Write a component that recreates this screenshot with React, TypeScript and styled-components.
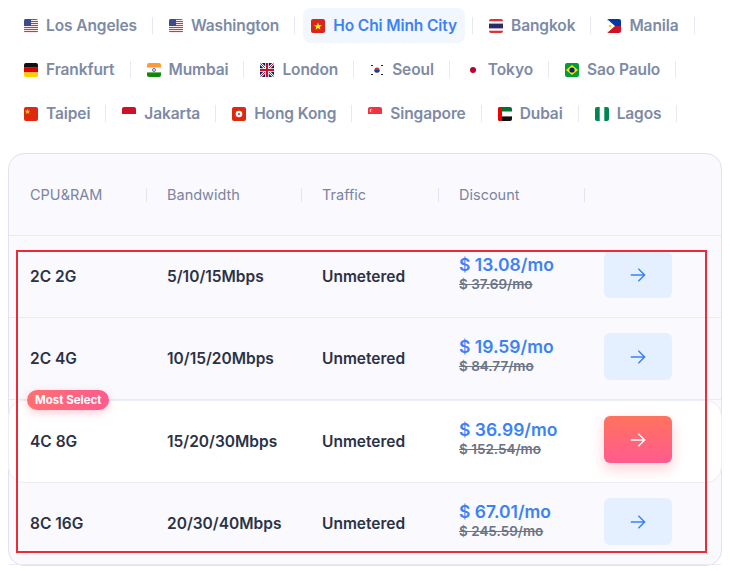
import React from "react";
import styled, { createGlobalStyle, css } from "styled-components";

const Global = createGlobalStyle`
  body { margin: 0; background: #fff; font-family: Inter, "Open Sans", sans-serif; }
`;

const Page = styled.div`
  position: relative;
  padding: 8px 8px 0 8px;
  width: 730px;
  box-sizing: border-box;
`;

const Tabs = styled.div`
  display: flex;
  flex-direction: column;
  gap: 9px;
  margin-bottom: 22px;
`;

const TabRow = styled.div`
  display: flex;
`;

const Tab = styled.div<{ $active?: boolean }>`
  position: relative;
  display: flex;
  align-items: center;
  gap: 8px;
  height: 35px;
  padding: 0 8px;
  margin: 0 8px;
  border-radius: 8px;
  font-size: 15.5px;
  font-weight: 600;
  color: #7d8aa6;
  letter-spacing: -0.1px;
  ${(p) => p.$active && css`background: #f1f6ff; color: #3b82f6;`}
  &::after {
    content: "";
    position: absolute;
    right: -8px;
    top: 9px;
    height: 17px;
    width: 1px;
    background: #e6e9f2;
  }
`;

const Flag = styled.svg`
  width: 14px;
  height: 14px;
  border-radius: 2px;
  flex: none;
`;

const Card = styled.div`
  border: 1px solid #dfe3ef;
  border-radius: 16px;
  background: #f9f9fe;
`;

const Grid = css`
  display: grid;
  grid-template-columns: 137px 155px 137px 146px 1fr;
  align-items: center;
  padding-left: 21px;
`;

const Head = styled.div`
  ${Grid};
  height: 81px;
  border-bottom: 1px solid #e8ebf5;
  font-size: 14.5px;
  color: #7b84a0;
`;

const HeadCell = styled.div`
  position: relative;
  &::after {
    content: "";
    position: absolute;
    right: 20px;
    top: 2px;
    height: 14px;
    width: 1px;
    background: #e3e6ef;
  }
`;

const Row = styled.div<{ $hot?: boolean }>`
  ${Grid};
  position: relative;
  height: 81px;
  border-bottom: 1px solid #e8ebf5;
  font-size: 15.5px;
  font-weight: 600;
  color: #2b3246;
  ${(p) => p.$hot && css`background: #fff; border: 1px solid #eceef6; border-radius: 16px; margin: 0 -1px;`}
`;

const Price = styled.div`
  display: flex;
  flex-direction: column;
  gap: 1px;
  margin-top: -8px;
`;
const Now = styled.span`
  color: #3b82f6;
  font-size: 17.5px;
  font-weight: 600;
`;
const Old = styled.span`
  color: #6b7385;
  font-size: 13.5px;
  font-weight: 600;
  text-decoration: line-through;
`;

const Btn = styled.div<{ $hot?: boolean }>`
  width: 68px;
  height: 47px;
  border-radius: 6px;
  display: flex;
  align-items: center;
  justify-content: center;
  margin-left: -1px;
  margin-top: -4px;
  background: #e4f0ff;
  color: #3b82f6;
  ${(p) => p.$hot && css`background: linear-gradient(180deg, #ff735d, #ff5b8e); color: #fff; box-shadow: 0 6px 14px rgba(255,100,120,.3);`}
`;

const Badge = styled.div`
  position: absolute;
  left: 18px;
  top: -11px;
  padding: 3px 8px;
  border-radius: 10px;
  background: linear-gradient(90deg, #ff7070, #ff5b8e);
  color: #fff;
  font-size: 11.5px;
  font-weight: 700;
  box-shadow: 0 3px 8px rgba(255,90,120,.3);
`;

const Outline = styled.div`
  position: absolute;
  left: 16px;
  top: 250px;
  width: 687px;
  height: 299px;
  border: 2px solid #ee2a3a;
  pointer-events: none;
`;

const Arrow = () => (
  <svg width="20" height="20" viewBox="0 0 24 24" fill="none" stroke="currentColor" strokeWidth="1.8" strokeLinecap="round" strokeLinejoin="round">
    <path d="M4 12h16M13 5l7 7-7 7" />
  </svg>
);

const flags: Record<string, React.ReactNode> = {
  us: (<><rect width="14" height="14" fill="#fff" />{[0,2,4,6,8,10,12].map(y=> <rect key={y} y={y} width="14" height="1.1" fill="#d33" />)}<rect width="7" height="7" fill="#3c4b8c" /></>),
  vn: (<><rect width="14" height="14" fill="#da251d" /><polygon points="7,3.5 8,6.3 11,6.3 8.6,8 9.5,10.8 7,9.1 4.5,10.8 5.4,8 3,6.3 6,6.3" fill="#ff0" /></>),
  th: (<><rect width="14" height="14" fill="#fff" /><rect width="14" height="2.3" fill="#d33" /><rect y="11.7" width="14" height="2.3" fill="#d33" /><rect y="4.6" width="14" height="4.8" fill="#2d2a6b" /></>),
  ph: (<><rect width="14" height="7" fill="#0038a8" /><rect y="7" width="14" height="7" fill="#ce1126" /><polygon points="0,0 8,7 0,14" fill="#fff" /><circle cx="3" cy="7" r="1.3" fill="#fcd116" /></>),
  de: (<><rect width="14" height="4.7" fill="#111" /><rect y="4.7" width="14" height="4.7" fill="#d00" /><rect y="9.4" width="14" height="4.6" fill="#fc0" /></>),
  in: (<><rect width="14" height="4.7" fill="#f93" /><rect y="4.7" width="14" height="4.7" fill="#fff" /><rect y="9.4" width="14" height="4.6" fill="#128807" /><circle cx="7" cy="7" r="1.5" fill="none" stroke="#008" strokeWidth=".6" /></>),
  gb: (<><rect width="14" height="14" fill="#012169" /><path d="M0 0L14 14M14 0L0 14" stroke="#fff" strokeWidth="2.5" /><path d="M0 0L14 14M14 0L0 14" stroke="#c8102e" strokeWidth="1" /><path d="M7 0v14M0 7h14" stroke="#fff" strokeWidth="3.5" /><path d="M7 0v14M0 7h14" stroke="#c8102e" strokeWidth="2" /></>),
  kr: (<><rect width="14" height="14" fill="#fff" /><circle cx="7" cy="7" r="2.6" fill="#cd2e3a" /><path d="M4.4 7a2.6 2.6 0 0 0 5.2 0" fill="#0047a0" /><g fill="#222"><rect x="1" y="2" width="2" height="1" /><rect x="11" y="2" width="2" height="1" /><rect x="1" y="11" width="2" height="1" /><rect x="11" y="11" width="2" height="1" /></g></>),
  jp: (<><rect width="14" height="14" fill="#fff" /><circle cx="7" cy="7" r="3" fill="#bc002d" /></>),
  br: (<><rect width="14" height="14" fill="#009c3b" /><polygon points="7,2 13,7 7,12 1,7" fill="#ffdf00" /><circle cx="7" cy="7" r="2.6" fill="#002776" /></>),
  cn: (<><rect width="14" height="14" fill="#de2910" /><polygon points="3.5,1.8 4.2,3.8 6.2,3.8 4.6,5 5.2,7 3.5,5.8 1.8,7 2.4,5 0.8,3.8 2.8,3.8" fill="#ffde00" /></>),
  id: (<><rect width="14" height="7" fill="#ce1126" /><rect y="7" width="14" height="7" fill="#fff" /></>),
  hk: (<><rect width="14" height="14" fill="#de2910" /><circle cx="7" cy="7" r="3.3" fill="#fff" /><circle cx="7" cy="7" r="1" fill="#de2910" /></>),
  sg: (<><rect width="14" height="7" fill="#ef3340" /><rect y="7" width="14" height="7" fill="#fff" /><circle cx="3.5" cy="3.5" r="1.8" fill="#fff" /><circle cx="4.2" cy="3.5" r="1.6" fill="#ef3340" /></>),
  ae: (<><rect width="14" height="4.7" fill="#00732f" /><rect y="4.7" width="14" height="4.7" fill="#fff" /><rect y="9.4" width="14" height="4.6" fill="#111" /><rect width="4" height="14" fill="#e00" /></>),
  ng: (<><rect width="14" height="14" fill="#fff" /><rect width="4.7" height="14" fill="#008751" /><rect x="9.3" width="4.7" height="14" fill="#008751" /></>),
};

const cityRows: [string, string][][] = [
  [["us","Los Angeles"],["us","Washington"],["vn","Ho Chi Minh City"],["th","Bangkok"],["ph","Manila"]],
  [["de","Frankfurt"],["in","Mumbai"],["gb","London"],["kr","Seoul"],["jp","Tokyo"],["br","Sao Paulo"]],
  [["cn","Taipei"],["id","Jakarta"],["hk","Hong Kong"],["sg","Singapore"],["ae","Dubai"],["ng","Lagos"]],
];

const plans = [
  { cpu: "2C 2G", bw: "5/10/15Mbps", now: "$ 13.08/mo", old: "$ 37.69/mo" },
  { cpu: "2C 4G", bw: "10/15/20Mbps", now: "$ 19.59/mo", old: "$ 84.77/mo" },
  { cpu: "4C 8G", bw: "15/20/30Mbps", now: "$ 36.99/mo", old: "$ 152.54/mo", hot: true },
  { cpu: "8C 16G", bw: "20/30/40Mbps", now: "$ 67.01/mo", old: "$ 245.59/mo" },
];

export default function App() {
  return (
    <Page>
      <Global />
      <Tabs>
        {cityRows.map((row, i) => (
          <TabRow key={i}>
            {row.map(([f, n]) => (
              <Tab key={n} $active={n === "Ho Chi Minh City"}>
                <Flag viewBox="0 0 14 14">{flags[f]}</Flag>
                {n}
              </Tab>
            ))}
          </TabRow>
        ))}
      </Tabs>
      <Card>
        <Head>
          <HeadCell>CPU&amp;RAM</HeadCell>
          <HeadCell>Bandwidth</HeadCell>
          <HeadCell>Traffic</HeadCell>
          <HeadCell>Discount</HeadCell>
          <div />
        </Head>
        {plans.map((p) => (
          <Row key={p.cpu} $hot={p.hot}>
            {p.hot && <Badge>Most Select</Badge>}
            <div>{p.cpu}</div>
            <div>{p.bw}</div>
            <div>Unmetered</div>
            <Price><Now>{p.now}</Now><Old>{p.old}</Old></Price>
            <Btn $hot={p.hot}><Arrow /></Btn>
          </Row>
        ))}
      </Card>
      <Outline />
    </Page>
  );
}
